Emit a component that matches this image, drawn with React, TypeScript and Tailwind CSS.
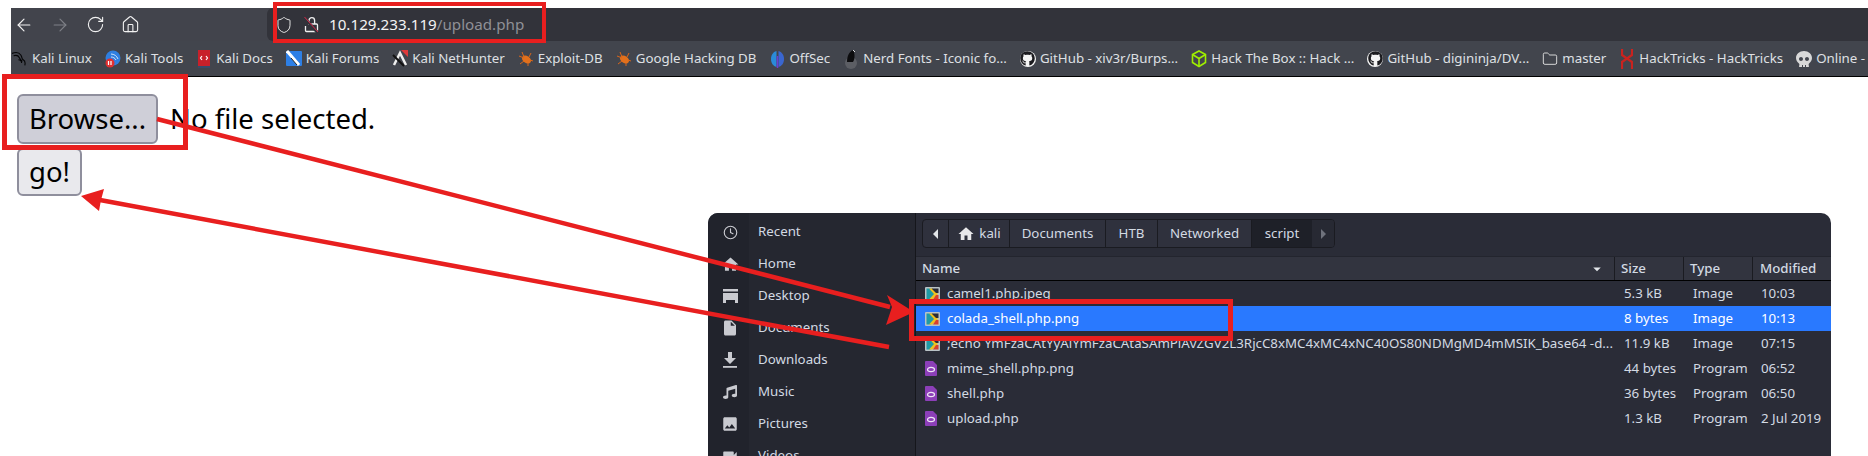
import { ArrowLeft, ArrowRight, RotateCw, Shield, Clock, House, Folder } from "lucide-react";
import { FaGithub, FaSkull, FaMusic } from "react-icons/fa";
import { MdHome, MdInsertDriveFile, MdImage, MdVideocam, MdArrowDropDown } from "react-icons/md";
import type { ReactNode } from "react";

function KaliIcon() {
  return (
    <svg width="20" height="20" viewBox="0 0 20 20" fill="none" stroke="#050506" strokeWidth="1.400">
      <path d="M0 3c5-2 9-1 11 2s1 5 3 6 3 3 2 7" />
      <path d="M2 6c3-1 6 0 7 2s2 3 4 5" />
      <path d="M8 11c2 0 4 1 4 4" />
    </svg>
  );
}

function ToolsIcon() {
  return (
    <svg width="16" height="18" viewBox="0 0 16 18">
      <circle cx="8" cy="8" r="7.500" fill="#2f7fe0" />
      <path d="M6 4c3 0 6 2 7 5M6 7c2 0 4 1 5 3" stroke="#cfe3fa" fill="none" />
      <circle cx="5" cy="13" r="4.500" fill="#e03030" />
      <path d="M3.500 11v4M6 11v4" stroke="#fff" strokeWidth="1.200" />
    </svg>
  );
}

function DocsIcon() {
  return (
    <svg width="14" height="18" viewBox="0 0 14 18">
      <rect x="1" y="0" width="12" height="16" fill="#c8202a" />
      <rect x="1" y="16" width="12" height="2" fill="#3a4a6a" />
      <path d="M5 6 3.500 8 5 10M9 6l1.500 2L9 10" stroke="#fff" fill="none" strokeWidth="1.200" />
    </svg>
  );
}

function ForumsIcon() {
  return (
    <svg width="16" height="18" viewBox="0 0 16 18">
      <rect x="0" y="1" width="16" height="15" rx="1" fill="#2d7fe6" />
      <path d="M1 1l12 14" stroke="#fff" strokeWidth="3" />
      <path d="M5 8l6 7" stroke="#222" strokeWidth="1" />
    </svg>
  );
}

function HunterIcon() {
  return (
    <svg width="16" height="18" viewBox="0 0 16 18">
      <path d="M9 0h7v7z" fill="#e03a3a" />
      <path d="M2 15 8 3l6 12" stroke="#eee" strokeWidth="2.500" fill="none" />
      <path d="M1 5l11 11" stroke="#111" strokeWidth="2" />
    </svg>
  );
}

function BugIcon() {
  return (
    <svg width="16" height="16" viewBox="0 0 16 16">
      <ellipse cx="8.500" cy="8.500" rx="5" ry="3.500" fill="#e2701c" transform="rotate(35 8.500 8.500)" />
      <path d="M1 5l5 2M4 1l2 5M2 13l4-3M13 2l-2 4M15 10l-3-1M10 15l0-3" stroke="#d9661a" strokeWidth="1" />
    </svg>
  );
}

function OffSecIcon() {
  return (
    <svg width="15" height="18" viewBox="0 0 15 18">
      <path d="M6.500 1C3 2 1 5 1 9s2 7 5.500 8z" fill="#2a8bd8" />
      <path d="M8.500 1C12 2 14 5 14 9s-2 7-5.500 8z" fill="#3a66d0" />
      <rect x="6.700" y="6" width="1.600" height="12" fill="#6a3fd0" />
    </svg>
  );
}

function NerdIcon() {
  return (
    <svg width="14" height="20" viewBox="0 0 14 20">
      <circle cx="7" cy="14" r="6" fill="#5c5e64" />
      <path d="M3 13c0-6 2-10 6-12 2 3 2 9 0 12z" fill="#0c0c0e" />
      <path d="M9 1l2 2" stroke="#ddd" />
    </svg>
  );
}

function HtbIcon() {
  return (
    <svg width="16" height="18" viewBox="0 0 16 18" fill="none" stroke="#9fef00" strokeWidth="1.600">
      <path d="M8 1l6.500 3.500v8L8 16.500 1.500 12.500v-8z" />
      <path d="M1.500 4.500 8 8.500l6.500-4M8 8.500v8" />
    </svg>
  );
}

function TricksIcon() {
  return (
    <svg width="12" height="20" viewBox="0 0 12 20" fill="none" stroke="#c9231f" strokeWidth="2.200">
      <path d="M1 0v6l10 7v7" />
      <path d="M11 0v6L1 13v7" />
    </svg>
  );
}

function GithubIcon() {
  return (
    <span className="flex h-4 w-4 items-center justify-center rounded-full bg-[#f4f4f4]">
      <FaGithub className="h-[15px] w-[15px] text-[#1b1b1f]" />
    </span>
  );
}

function NoLockIcon() {
  return (
    <svg width="15" height="17" viewBox="0 0 15 17" fill="none">
      <path d="M5 8V4.500a2.800 2.800 0 0 1 5.600 0V8" stroke="#f0f0f0" strokeWidth="1.300" />
      <path d="M4 8H12.500a1 1 0 0 1 1 1v5.500a1 1 0 0 1-1 1H2.500a1 1 0 0 1-1-1V10" stroke="#f0f0f0" strokeWidth="1.300" />
      <path d="M0.500 2 13.500 16.500" stroke="#32333a" strokeWidth="3" />
      <path d="M0.500 1 14 16" stroke="#d8284a" strokeWidth="1" />
    </svg>
  );
}

const bookmarks: { icon: ReactNode; label: string }[] = [
  { icon: <KaliIcon />, label: "Kali Linux" },
  { icon: <ToolsIcon />, label: "Kali Tools" },
  { icon: <DocsIcon />, label: "Kali Docs" },
  { icon: <ForumsIcon />, label: "Kali Forums" },
  { icon: <HunterIcon />, label: "Kali NetHunter" },
  { icon: <BugIcon />, label: "Exploit-DB" },
  { icon: <BugIcon />, label: "Google Hacking DB" },
  { icon: <OffSecIcon />, label: "OffSec" },
  { icon: <NerdIcon />, label: "Nerd Fonts - Iconic fo..." },
  { icon: <GithubIcon />, label: "GitHub - xiv3r/Burps..." },
  { icon: <HtbIcon />, label: "Hack The Box :: Hack ..." },
  { icon: <GithubIcon />, label: "GitHub - digininja/DV..." },
  { icon: <Folder size={16} strokeWidth={1.300} className="text-[#ececec]" />, label: "master" },
  { icon: <TricksIcon />, label: "HackTricks - HackTricks" },
  { icon: <FaSkull size={16} className="text-[#d8d8d8]" />, label: "Online - ..." },
];

function BrowserChrome() {
  return (
    <div className="ml-[11px] border-b border-black">
      <div className="flex h-[33px] items-center bg-[#42444c]">
        <div className="flex w-[256px] shrink-0 items-center text-[#f2f2f2]">
          <ArrowLeft size={20} strokeWidth={1.400} className="ml-[3px]" />
          <ArrowRight size={20} strokeWidth={1.400} className="ml-[16px] text-[#7e8087]" />
          <RotateCw size={19} strokeWidth={1.400} className="ml-[16px]" />
          <House size={19} strokeWidth={1.400} className="ml-[16px]" />
        </div>
        <div className="flex h-full flex-1 items-center rounded-l-[6px] bg-[#32333a] pl-[8px]">
          <Shield size={18} strokeWidth={1.300} className="text-[#e8e8e8]" />
          <span className="ml-[11px] flex">
            <NoLockIcon />
          </span>
          <span className="ml-[10px] text-[15.200px] text-[#f4f4f4]">
            10.129.233.119<span className="text-[#8f9096]">/upload.php</span>
          </span>
        </div>
      </div>
      <div className="flex h-[35px] items-center gap-[13px] overflow-hidden whitespace-nowrap bg-[#42454d] pl-[1px] text-[13.300px] text-[#dfe0e4]">
        {bookmarks.map((b) => (
          <div key={b.label} className="flex shrink-0 items-center gap-[4px]">
            <span className="flex w-4 shrink-0 justify-center">{b.icon}</span>
            <span>{b.label}</span>
          </div>
        ))}
      </div>
    </div>
  );
}

function DesktopIcon() {
  return (
    <svg width="15" height="14" viewBox="0 0 15 14" fill="#c9cad0">
      <rect x="0" y="0" width="15" height="2.500" />
      <path d="M0 4h15v10h-3v-3H3v3H0z" />
    </svg>
  );
}

function DownloadIcon() {
  return (
    <svg width="14" height="16" viewBox="0 0 14 16" fill="#c9cad0">
      <path d="M5 0h4v6h4l-6 6-6-6h4z" />
      <rect x="0" y="14" width="14" height="1.800" />
    </svg>
  );
}

const places: { icon: ReactNode; label: string }[] = [
  { icon: <Clock size={15} strokeWidth={1.800} />, label: "Recent" },
  { icon: <MdHome size={19} />, label: "Home" },
  { icon: <DesktopIcon />, label: "Desktop" },
  { icon: <MdInsertDriveFile size={18} />, label: "Documents" },
  { icon: <DownloadIcon />, label: "Downloads" },
  { icon: <FaMusic size={14} />, label: "Music" },
  { icon: <MdImage size={18} />, label: "Pictures" },
  { icon: <MdVideocam size={18} />, label: "Videos" },
];

function ImageFileIcon() {
  return (
    <svg width="15" height="14" viewBox="0 0 15 14">
      <rect x="0" y="0" width="15" height="14" rx="1" fill="#b9c2c6" />
      <path d="M1.500 1.500h4l4.500 5.500-4.500 5.500h-4z" fill="#1f9aa6" />
      <path d="M4 1.500h3.500L13 7l-5.500 5.500H4L9 7z" fill="#f0c020" />
      <path d="M6.500 1.500h7v4.500H11z" fill="#2a2c37" />
      <path d="M8 12.500 11 8h2.500v4.500z" fill="#d8402f" />
    </svg>
  );
}

function ProgramFileIcon() {
  return (
    <svg width="12" height="15" viewBox="0 0 12 15">
      <path d="M1 0h7l4 4v10a1 1 0 0 1-1 1H1a1 1 0 0 1-1-1V1a1 1 0 0 1 1-1z" fill="#8c3fb8" />
      <ellipse cx="6" cy="8.500" rx="3.500" ry="2.200" fill="none" stroke="#efe6f5" strokeWidth="1.200" />
    </svg>
  );
}

const files = [
  { name: "camel1.php.jpeg", size: "5.3 kB", type: "Image", modified: "10:03", image: true },
  { name: "colada_shell.php.png", size: "8 bytes", type: "Image", modified: "10:13", image: true, selected: true },
  {
    name: ";echo YmFzaCAtYyAiYmFzaCAtaSAmPiAvZGV2L3RjcC8xMC4xMC4xNC40OS80NDMgMD4mMSIK_base64 -d...",
    size: "11.9 kB",
    type: "Image",
    modified: "07:15",
    image: true,
  },
  { name: "mime_shell.php.png", size: "44 bytes", type: "Program", modified: "06:52" },
  { name: "shell.php", size: "36 bytes", type: "Program", modified: "06:50" },
  { name: "upload.php", size: "1.3 kB", type: "Program", modified: "2 Jul 2019" },
];

function FileDialog() {
  return (
    <div className="absolute left-[708px] top-[213px] flex h-[260px] w-[1123px] overflow-hidden rounded-[10px] bg-[#2a2c37] text-[13.300px] text-[#d3dae3]">
      <div className="flex w-[208px] shrink-0 border-r border-[#15161b]">
        <div className="flex w-[41px] shrink-0 flex-col bg-[#21232c] pt-[3px] text-[#c9cad0]">
          {places.map((p) => (
            <div key={p.label} className="flex h-8 shrink-0 items-center justify-center pl-[3px]">
              {p.icon}
            </div>
          ))}
        </div>
        <div className="flex flex-1 flex-col bg-[#252730] pt-[3px] pl-[9px]">
          {places.map((p) => (
            <div key={p.label} className="flex h-8 shrink-0 items-center">
              {p.label}
            </div>
          ))}
        </div>
      </div>
      <div className="flex min-w-0 flex-1 flex-col">
        <div className="ml-[6px] mt-[6px] flex h-[29px] w-[413px] overflow-hidden rounded-[4px] border border-[#1a1b21] bg-[#2f313d]">
          <div className="flex w-[26px] items-center justify-center border-r border-[#1a1b21]">
            <span className="h-0 w-0 border-y-[5px] border-r-[5px] border-y-transparent border-r-[#e3e6ea]" />
          </div>
          <div className="flex w-[61px] items-center justify-center gap-[4px] border-r border-[#1a1b21]">
            <MdHome size={18} className="text-[#e8e8ea]" />
            kali
          </div>
          <div className="flex w-[96px] items-center justify-center border-r border-[#1a1b21]">Documents</div>
          <div className="flex w-[52px] items-center justify-center border-r border-[#1a1b21]">HTB</div>
          <div className="flex w-[94px] items-center justify-center border-r border-[#1a1b21]">Networked</div>
          <div className="flex w-[60px] items-center justify-center bg-[#1e2028]">script</div>
          <div className="flex flex-1 items-center justify-center bg-[#272933]">
            <span className="h-0 w-0 border-y-[5px] border-l-[5px] border-y-transparent border-l-[#6f727c]" />
          </div>
        </div>
        <div className="mt-[8px] grid h-[25px] grid-cols-[699px_69px_69px_77px] border-y border-t-[#23252e] border-b-black bg-[#32343f] font-medium">
          <div className="flex items-center justify-between border-r border-[#1a1b21] pl-[6px] pr-[8px]">
            Name
            <MdArrowDropDown size={18} className="text-[#e3e6ea]" />
          </div>
          <div className="flex items-center border-r border-[#1a1b21] pl-[6px]">Size</div>
          <div className="flex items-center border-r border-[#1a1b21] pl-[6px]">Type</div>
          <div className="flex items-center pl-[7px]">Modified</div>
        </div>
        {files.map((f) => (
          <div
            key={f.name}
            className={`grid h-[25px] shrink-0 grid-cols-[699px_69px_69px_77px] items-center whitespace-nowrap ${
              f.selected ? "bg-[#2979ff] text-white" : ""
            }`}
          >
            <div className="flex items-center overflow-hidden pl-[9px]">
              <span className="flex w-[22px] shrink-0">{f.image ? <ImageFileIcon /> : <ProgramFileIcon />}</span>
              {f.name}
            </div>
            <div className="pl-[9px]">{f.size}</div>
            <div className="pl-[9px]">{f.type}</div>
            <div className="pl-[8px]">{f.modified}</div>
          </div>
        ))}
      </div>
    </div>
  );
}

function Annotations() {
  return (
    <>
      <div className="absolute left-[273px] top-[2px] h-[41px] w-[273px] border-[4px] border-[#e81f1f]" />
      <div className="absolute left-[2px] top-[74px] h-[76px] w-[186px] border-[5px] border-[#e81f1f]" />
      <div className="absolute left-[909px] top-[299px] h-[42px] w-[324px] border-[5px] border-[#e81f1f]" />
      <svg className="absolute inset-0" width="1868" height="456" fill="#e81f1f" stroke="none">
        <path d="M157 119 890 307" stroke="#e81f1f" strokeWidth="4.500" />
        <path d="M914 312 887 295 892 307 886 325z" />
        <path d="M889 347 100 200" stroke="#e81f1f" strokeWidth="4.500" />
        <path d="M81 196 104 189 101 200 99 211z" />
      </svg>
    </>
  );
}

export default function App() {
  return (
    <div
      className="relative h-[456px] w-[1868px] overflow-hidden bg-white pt-2"
      style={{ fontFamily: '"Noto Sans", sans-serif' }}
    >
      <BrowserChrome />
      <div className="pl-[17px] pt-[17px] text-[27.500px] leading-[36px] text-black">
        <div className="flex items-center">
          <button className="h-[50px] w-[141px] rounded-[6px] border-2 border-[#8f8f9d] bg-[#cfcfd8]">Browse...</button>
          <span className="ml-[12px]">No file selected.</span>
        </div>
        <button className="mt-[4px] h-[48px] w-[65px] rounded-[6px] border-2 border-[#8f8f9d] bg-[#e9e9ed]">go!</button>
      </div>
      <FileDialog />
      <Annotations />
    </div>
  );
}
